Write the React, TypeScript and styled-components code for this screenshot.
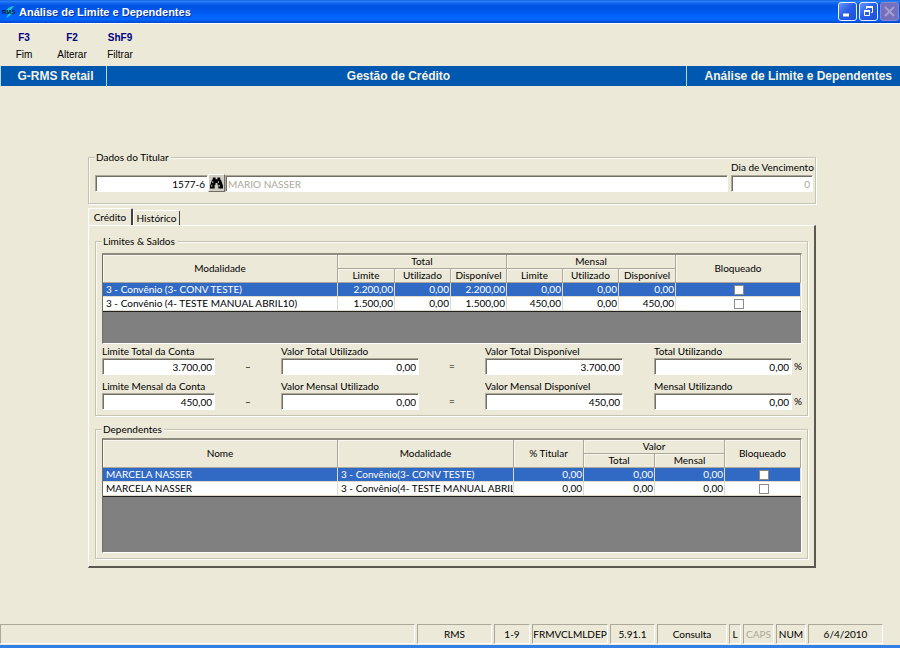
import React from "react";
import styled, { createGlobalStyle } from "styled-components";

const face = "#ece9d8";
const shade = "#aca899";
const darkShade = "#716f64";
const selection = "#316ac5";
const uiFont = `Lato, "Liberation Sans", Arial, sans-serif`;
const arial = `"Liberation Sans", Arial, sans-serif`;

const GlobalStyle = createGlobalStyle`
  *, *::before, *::after { box-sizing: border-box; }
  body {
    margin: 0;
    background: ${face};
    color: #000;
    font: 10px/14px ${uiFont};
    font-variant-ligatures: none;
  }
  button, input { font: inherit; color: inherit; margin: 0; padding: 0; }
`;

const Window = styled.div`
  display: flex;
  flex-direction: column;
  min-height: 100vh;
  border-bottom: 3px solid #2f7fe6;
`;

const TitleBar = styled.header`
  display: flex;
  align-items: center;
  gap: 2px;
  height: 23px;
  padding: 0 1px 0 2px;
  background: linear-gradient(
    #0a55dc 0,
    #2f86f6 1px,
    #1266f0 3px,
    #0053e3 6px,
    #0058ee 12px,
    #0066ff 16px,
    #0064fa 20px,
    #0046c8 23px
  );
  box-shadow: 0 1px 0 #fff;
`;

const WindowTitle = styled.h1`
  flex: 1;
  margin: 0;
  color: #fff;
  font: bold 11px/16px ${arial};
  text-shadow: 1px 1px 0 #0a2f9c;
`;

const Caption = styled.button<{ $off?: boolean }>`
  display: grid;
  place-items: center;
  width: 19px;
  height: 19px;
  border: 1px solid ${(p) => (p.$off ? "#8a86cc" : "#e8efff")};
  border-radius: 3px;
  background: ${(p) =>
    p.$off ? "#7470bd" : "linear-gradient(135deg, #6a98f8, #2a5fe8 45%, #1c4fd8)"};
`;

const Toolbar = styled.nav`
  display: flex;
  height: 43px;
  padding-top: 8px;
`;

const Tool = styled.button`
  width: 48px;
  height: 32px;
  border: 0;
  background: none;
  text-align: center;
`;

const ToolKey = styled.b`
  display: block;
  color: #000080;
  font: bold 10px/14px ${arial};
`;

const ToolName = styled.span`
  display: block;
  padding-top: 2px;
  font: 10px/16px ${arial};
`;

const Banner = styled.div`
  display: grid;
  grid-template-columns: 106px 1fr 213px;
  height: 20px;
  border-left: 1px solid #b8d4ec;
  background: #0058b0;
`;

const BannerCell = styled.div<{ $end?: boolean }>`
  padding: 0 ${(p) => (p.$end ? 8 : 0)}px 0 4px;
  border-right: ${(p) => (p.$end ? 0 : 1)}px solid #b8d4ec;
  color: #f4f2e6;
  font: bold 12px/21px ${arial};
  text-align: ${(p) => (p.$end ? "right" : "center")};
  white-space: nowrap;
`;

const Main = styled.main`
  flex: 1;
  padding: 64px 84px 20px 88px;
`;

const Group = styled.fieldset`
  min-width: 0;
  margin: 0;
  padding: 0 5px 5px 6px;
  border: 1px solid #c6c3b2;
  box-shadow: 1px 1px 0 #fff, inset 1px 1px 0 #fbfaf4;
`;

const Legend = styled.legend`
  padding: 0 2px 0 1px;
  background: ${face};
  line-height: 14px;
`;

const HolderRow = styled.div`
  display: flex;
  align-items: flex-end;
  margin: -4px -3px 0 0;
  padding-bottom: 6px;
`;

const Field = styled.input<{ $dim?: boolean; $left?: boolean }>`
  display: block;
  width: 100%;
  min-width: 0;
  height: 17px;
  padding: 1px 2px 0 2px;
  border: 1px solid;
  border-color: ${shade} #fff #fff ${shade};
  border-radius: 0;
  box-shadow: inset 1px 1px 0 ${darkShade};
  background: #fff;
  color: ${(p) => (p.$dim ? shade : "#000")};
  text-align: ${(p) => (p.$left ? "left" : "right")};
  outline: 0;
`;

const CodeSlot = styled.div`
  width: 113px;
`;

const NameSlot = styled.div`
  flex: 1;
  margin-right: 3px;
`;

const DueSlot = styled.label`
  width: 82px;
  white-space: nowrap;
`;

const DueCaption = styled.span`
  display: block;
  padding-bottom: 1px;
`;

const FindButton = styled.button`
  display: grid;
  place-items: center;
  width: 17px;
  height: 18px;
  border: 1px solid;
  border-color: #fff ${darkShade} ${darkShade} #fff;
  background: #d0cec2;
`;

const Tabs = styled.div`
  display: flex;
  align-items: flex-end;
  margin-top: 4px;
`;

const Tab = styled.button<{ $active?: boolean }>`
  width: ${(p) => (p.$active ? 45 : 47)}px;
  height: ${(p) => (p.$active ? 17 : 15)}px;
  border: 1px solid;
  border-color: #fff #404040 transparent #fff;
  border-right-width: ${(p) => (p.$active ? 2 : 1)}px;
  border-bottom: 0;
  border-radius: 2px 2px 0 0;
  background: ${face};
  line-height: 14px;
`;

const TabPanel = styled.section`
  display: flex;
  flex-direction: column;
  gap: 6px;
  padding: 8px 6px 7px;
  border: solid;
  border-width: 1px 2px 2px 1px;
  border-color: #fff #5b594f #5b594f #fff;
`;

const GridFrame = styled.div<{ $tall?: boolean }>`
  min-height: ${(p) => (p.$tall ? 115 : 91)}px;
  margin-top: ${(p) => (p.$tall ? 2 : 5)}px;
  border: solid;
  border-width: 2px 1px 1px;
  border-color: #8f8c7f #fff #fff ${darkShade};
  background: #808080;
`;

const Table = styled.table`
  width: 100%;
  table-layout: fixed;
  border-collapse: separate;
  border-spacing: 0;
  border-bottom: 1px solid #202020;
`;

const Col = styled.col<{ $w?: number }>`
  width: ${(p) => (p.$w ? `${p.$w}px` : "auto")};
`;

const Head = styled.th`
  height: 14px;
  padding: 0;
  border: solid ${shade};
  border-width: 0 1px 1px 0;
  background: ${face};
  box-shadow: inset 1px 1px 0 #f8f6ee;
  font-weight: normal;
  line-height: 13px;
`;

const Row = styled.tr<{ $selected?: boolean }>`
  background: ${(p) => (p.$selected ? selection : "#fff")};
  color: ${(p) => (p.$selected ? "#fff" : "#000")};
`;

const Cell = styled.td<{ $align?: "left" | "center" }>`
  height: 14px;
  padding: 0 1px 0 3px;
  border: solid #dedbc9;
  border-width: 0 1px 1px 0;
  line-height: 13px;
  text-align: ${(p) => p.$align ?? "right"};
  white-space: nowrap;
  overflow: hidden;
`;

const Check = styled.input`
  display: block;
  width: 10px;
  height: 10px;
  margin: 0 auto;
  appearance: none;
  border: 1px solid #8c8a85;
  background: #fff;
`;

const Sums = styled.div`
  display: grid;
  grid-template-columns: 113fr 66fr 138fr 66fr 138fr 31fr 138fr 12fr;
  row-gap: 4px;
  margin-right: -2px;
`;

const Sum = styled.label`
  min-width: 0;
  white-space: nowrap;
`;

const Sign = styled.span`
  align-self: end;
  min-width: 0;
  height: 17px;
  line-height: 17px;
  text-align: center;
`;

const StatusBar = styled.footer`
  display: flex;
  gap: 2px;
  padding-right: 17px;
  margin-bottom: 1px;
`;

const StatusCell = styled.span<{ $w?: number; $dim?: boolean }>`
  flex: ${(p) => (p.$w ? `0 0 ${p.$w}px` : "1")};
  height: 20px;
  border: 1px solid;
  border-color: ${shade} #fff #fff ${shade};
  color: ${(p) => (p.$dim ? shade : "#000")};
  line-height: 19px;
  text-align: center;
  white-space: nowrap;
`;

const Logo = () => (
  <svg width="15" height="14" viewBox="0 0 15 14" aria-hidden="true">
    <path d="M4 13 L7 7.500 L3 7.500 Q6 1 12 1 L8.500 5.500 L12 5.500 Q9 11 4 13Z" fill="#19c8c0" />
    <text x="0" y="9" fontFamily="Liberation Sans" fontSize="6" fontWeight="bold" fill="#04154e">
      RMS
    </text>
  </svg>
);

const Binoculars = () => (
  <svg width="13" height="12" viewBox="0 0 14 12" aria-hidden="true">
    <path
      d="M3 0h3v2h2V0h3v2l1 1 2 6v3H9V8H8V6H6v2H5v4H0V9l2-6 1-1z"
      fill="#000"
    />
    <path d="M3 4v2M2 8v2M9 4v2M10 8v2" stroke="#d0cec2" />
  </svg>
);

const tools = [
  ["F3", "Fim"],
  ["F2", "Alterar"],
  ["ShF9", "Filtrar"],
];

const limits = [
  ["3 - Convênio (3- CONV TESTE)", "2.200,00", "0,00", "2.200,00", "0,00", "0,00", "0,00"],
  ["3 - Convênio (4- TESTE MANUAL ABRIL10)", "1.500,00", "0,00", "1.500,00", "450,00", "0,00", "450,00"],
];

const dependents = [
  ["MARCELA NASSER", "3 - Convênio(3- CONV TESTE)", "0,00", "0,00", "0,00"],
  ["MARCELA NASSER", "3 - Convênio(4- TESTE MANUAL ABRIL10)", "0,00", "0,00", "0,00"],
];

const sums = [
  ["Limite Total da Conta", "3.700,00", "–"],
  ["Valor Total Utilizado", "0,00", "="],
  ["Valor Total Disponível", "3.700,00", ""],
  ["Total Utilizando", "0,00", "%"],
  ["Limite Mensal da Conta", "450,00", "–"],
  ["Valor Mensal Utilizado", "0,00", "="],
  ["Valor Mensal Disponível", "450,00", ""],
  ["Mensal Utilizando", "0,00", "%"],
];

const status: { text: string; w?: number; dim?: boolean }[] = [
  { text: "" },
  { text: "RMS", w: 75 },
  { text: "1-9", w: 36 },
  { text: "FRMVCLMLDEP", w: 76 },
  { text: "5.91.1", w: 45 },
  { text: "Consulta", w: 70 },
  { text: "L", w: 12 },
  { text: "CAPS", w: 31, dim: true },
  { text: "NUM", w: 30 },
  { text: "6/4/2010", w: 75 },
];

function Rows({ data, texts }: { data: string[][]; texts: number }) {
  return (
    <tbody>
      {data.map((row, r) => (
        <Row key={r} $selected={r === 0}>
          {row.map((value, c) => (
            <Cell key={c} $align={c < texts ? "left" : undefined}>
              {value}
            </Cell>
          ))}
          <Cell $align="center">
            <Check type="checkbox" aria-label={`Bloqueado: ${row[0]}`} />
          </Cell>
        </Row>
      ))}
    </tbody>
  );
}

export default function App() {
  return (
    <Window>
      <GlobalStyle />
      <TitleBar>
        <Logo />
        <WindowTitle>Análise de Limite e Dependentes</WindowTitle>
        <Caption aria-label="Minimizar">
          <svg width="13" height="13" viewBox="0 0 13 13">
            <path d="M2 10h6" stroke="#fff" strokeWidth="3" />
          </svg>
        </Caption>
        <Caption aria-label="Restaurar">
          <svg width="13" height="13" viewBox="0 0 13 13" fill="none" stroke="#fff">
            <path d="M4.500 4V2.500h6v5H9" />
            <path d="M4 2h7" strokeWidth="2" />
            <path d="M2.500 5.500h5v5h-5z" />
            <path d="M2 6h6" strokeWidth="2" />
          </svg>
        </Caption>
        <Caption aria-label="Fechar" disabled $off>
          <svg width="13" height="13" viewBox="0 0 13 13">
            <path d="M2 2l9 9M11 2l-9 9" stroke="#a5a0d0" strokeWidth="2" />
          </svg>
        </Caption>
      </TitleBar>
      <Toolbar>
        {tools.map(([key, name]) => (
          <Tool key={key}>
            <ToolKey>{key}</ToolKey>
            <ToolName>{name}</ToolName>
          </Tool>
        ))}
      </Toolbar>
      <Banner>
        <BannerCell>G-RMS Retail</BannerCell>
        <BannerCell>Gestão de Crédito</BannerCell>
        <BannerCell $end>Análise de Limite e Dependentes</BannerCell>
      </Banner>
      <Main>
        <Group>
          <Legend>Dados do Titular</Legend>
          <HolderRow>
            <CodeSlot>
              <Field aria-label="Código do titular" defaultValue="1577-6" />
            </CodeSlot>
            <FindButton aria-label="Procurar">
              <Binoculars />
            </FindButton>
            <NameSlot>
              <Field aria-label="Nome do titular" defaultValue="MARIO NASSER" readOnly $dim $left />
            </NameSlot>
            <DueSlot>
              <DueCaption>Dia de Vencimento</DueCaption>
              <Field defaultValue="0" readOnly $dim />
            </DueSlot>
          </HolderRow>
        </Group>
        <Tabs role="tablist">
          <Tab role="tab" aria-selected="true" $active>
            Crédito
          </Tab>
          <Tab role="tab" aria-selected="false">
            Histórico
          </Tab>
        </Tabs>
        <TabPanel role="tabpanel">
          <Group>
            <Legend>Limites &amp; Saldos</Legend>
            <GridFrame>
              <Table>
                <colgroup>
                  <Col />
                  {[57, 56, 56, 56, 56, 57, 125].map((w, i) => (
                    <Col key={i} $w={w} />
                  ))}
                </colgroup>
                <thead>
                  <tr>
                    <Head rowSpan={2}>Modalidade</Head>
                    <Head colSpan={3}>Total</Head>
                    <Head colSpan={3}>Mensal</Head>
                    <Head rowSpan={2}>Bloqueado</Head>
                  </tr>
                  <tr>
                    {["Limite", "Utilizado", "Disponível", "Limite", "Utilizado", "Disponível"].map((t, i) => (
                      <Head key={i}>{t}</Head>
                    ))}
                  </tr>
                </thead>
                <Rows data={limits} texts={1} />
              </Table>
            </GridFrame>
            <Sums>
              {sums.map(([name, value, sign]) => (
                <React.Fragment key={name}>
                  <Sum>
                    {name}
                    <Field defaultValue={value} readOnly />
                  </Sum>
                  <Sign>{sign}</Sign>
                </React.Fragment>
              ))}
            </Sums>
          </Group>
          <Group>
            <Legend>Dependentes</Legend>
            <GridFrame $tall>
              <Table>
                <colgroup>
                  <Col />
                  {[176, 70, 71, 70, 76].map((w, i) => (
                    <Col key={i} $w={w} />
                  ))}
                </colgroup>
                <thead>
                  <tr>
                    <Head rowSpan={2}>Nome</Head>
                    <Head rowSpan={2}>Modalidade</Head>
                    <Head rowSpan={2}>% Titular</Head>
                    <Head colSpan={2}>Valor</Head>
                    <Head rowSpan={2}>Bloqueado</Head>
                  </tr>
                  <tr>
                    <Head>Total</Head>
                    <Head>Mensal</Head>
                  </tr>
                </thead>
                <Rows data={dependents} texts={2} />
              </Table>
            </GridFrame>
          </Group>
        </TabPanel>
      </Main>
      <StatusBar>
        {status.map((s, i) => (
          <StatusCell key={i} $w={s.w} $dim={s.dim}>
            {s.text}
          </StatusCell>
        ))}
      </StatusBar>
    </Window>
  );
}
